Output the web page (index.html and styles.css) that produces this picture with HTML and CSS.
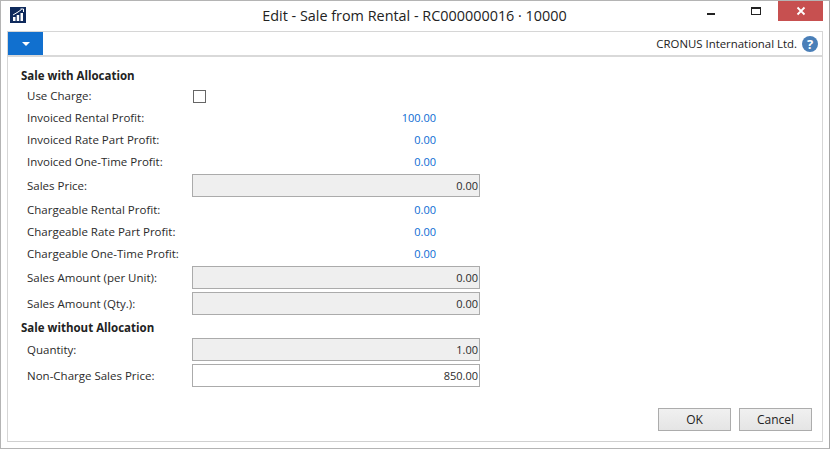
FILE: index.html
```html
<!DOCTYPE html>
<html lang="en">
<head>
    <meta charset="UTF-8">
    <title>Edit - Sale from Rental</title>
    <link rel="stylesheet" href="styles.css">
</head>
<body>
    <div class="window">
        <div class="titlebar">
            <svg class="app-icon" width="16" height="16" viewBox="0 0 16 16">
                <rect width="16" height="16" fill="#0f2a5c"/>
                <path d="M3 10h2.5v4H3zM6.7 8h2.5v6H6.7zM10.5 6H13v8h-2.5z" fill="#fff"/>
                <path d="M3 8 8 5l3.5-2.5M10.5 2H13.5v3" fill="none" stroke="#fff" stroke-width="1"/>
            </svg>
            <div class="title">Edit - Sale from Rental - RC000000016 · 10000</div>
            <div class="controls">
                <span class="ctl"><span class="min"></span></span>
                <span class="ctl"><span class="max"></span></span>
                <span class="ctl close">
                    <svg width="10" height="10" viewBox="0 0 10 10"><path d="M1.5 1.5l7 7M8.5 1.5l-7 7" stroke="#fff" stroke-width="1.8"/></svg>
                </span>
            </div>
        </div>
        <div class="panel">
            <div class="ribbon">
                <div class="menu-btn"><span class="arrow"></span></div>
                <div class="company">CRONUS International Ltd.</div>
                <svg class="help" width="16" height="16" viewBox="0 0 16 16">
                    <circle cx="8" cy="8" r="8" fill="#4a7fb8"/>
                    <text x="8" y="12.5" text-anchor="middle" class="help-mark">?</text>
                </svg>
            </div>
            <div class="content">
                <h2 class="group first">Sale with Allocation</h2>
                <div class="row r-check"><label>Use Charge:</label><span class="checkbox"></span></div>
                <div class="row"><label>Invoiced Rental Profit:</label><span class="value">100.00</span></div>
                <div class="row"><label>Invoiced Rate Part Profit:</label><span class="value">0.00</span></div>
                <div class="row"><label>Invoiced One-Time Profit:</label><span class="value">0.00</span></div>
                <div class="row r-input"><label>Sales Price:</label><span class="field">0.00</span></div>
                <div class="row"><label>Chargeable Rental Profit:</label><span class="value">0.00</span></div>
                <div class="row"><label>Chargeable Rate Part Profit:</label><span class="value">0.00</span></div>
                <div class="row"><label>Chargeable One-Time Profit:</label><span class="value">0.00</span></div>
                <div class="row r-input"><label>Sales Amount (per Unit):</label><span class="field">0.00</span></div>
                <div class="row r-input"><label>Sales Amount (Qty.):</label><span class="field">0.00</span></div>
                <h2 class="group">Sale without Allocation</h2>
                <div class="row r-input"><label>Quantity:</label><span class="field">1.00</span></div>
                <div class="row r-input"><label>Non-Charge Sales Price:</label><span class="field editable">850.00</span></div>
            </div>
            <div class="actions">
                <button>OK</button>
                <button>Cancel</button>
            </div>
        </div>
    </div>
</body>
</html>
```

FILE: styles.css
```css
html, body {
    margin: 0;
    padding: 0;
}

body {
    width: 830px;
    height: 449px;
    overflow: hidden;
    font-family: "Open Sans", "Noto Sans", sans-serif;
    font-size: 11.5px;
    color: #2b2b2b;
    background: #fff;
}

.window {
    box-sizing: border-box;
    width: 830px;
    height: 449px;
    display: flex;
    flex-direction: column;
    background: #fff;
    border: 1px solid #b4b4b4;
    border-right-color: #a8a8a8;
    padding: 0 6px 6px;
}

.titlebar {
    height: 30px;
    flex: none;
    display: flex;
    align-items: flex-start;
    margin: 0 -6px;
    position: relative;
}

.app-icon {
    margin: 6px 0 0 9px;
}

.title {
    flex: 1;
    text-align: center;
    font-size: 14.4px;
    color: #222;
    line-height: 30px;
    padding-right: 26px;
}

.controls {
    position: absolute;
    top: 0;
    right: 6px;
    display: flex;
}

.ctl {
    width: 45px;
    height: 20px;
    display: flex;
    align-items: center;
    justify-content: center;
}

.ctl.close {
    background: #c75050;
}

.min {
    width: 8px;
    height: 2px;
    background: #222;
    margin-top: 6px;
}

.max {
    box-sizing: border-box;
    width: 10px;
    height: 8px;
    border: 1px solid #222;
    border-top-width: 2px;
}

.panel {
    flex: 1;
    display: flex;
    flex-direction: column;
    border: 1px solid #d6d6d6;
    border-bottom-color: #d0d0d0;
}

.ribbon {
    height: 23px;
    flex: none;
    display: flex;
    align-items: center;
    border-bottom: 2px solid #d9d9d9;
}

.menu-btn {
    width: 35px;
    height: 23px;
    background: #1170cf;
    display: flex;
    align-items: center;
    justify-content: center;
}

.arrow {
    width: 0;
    height: 0;
    border-left: 4px solid transparent;
    border-right: 4px solid transparent;
    border-top: 4px solid #fff;
}

.company {
    flex: 1;
    text-align: right;
    font-size: 11.4px;
    color: #222;
    margin-right: 5px;
}

.help {
    margin-right: 4px;
}

.help-mark {
    font-family: "Open Sans", sans-serif;
    font-weight: 700;
    font-size: 13px;
    fill: #fff;
}

.content {
    flex: 1;
    padding: 11px 0 0 13px;
}

.group {
    margin: 4px 0 0;
    height: 16px;
    line-height: 16px;
    font-size: 11.5px;
    font-weight: 700;
    color: #222;
}

.group.first {
    margin-top: 0;
}

.row {
    display: flex;
    align-items: center;
    height: 22px;
    padding-left: 6px;
}

.row label {
    width: 165px;
    flex: none;
}

.r-check {
    height: 22px;
}

.r-input {
    height: 26px;
}

.checkbox {
    box-sizing: border-box;
    width: 13px;
    height: 13px;
    margin: 3px 0 0 1px;
    border: 1px solid #666;
    background: #fff;
}

.value {
    width: 244px;
    text-align: right;
    font-size: 11px;
    color: #0b6bd3;
}

.field {
    box-sizing: border-box;
    width: 288px;
    height: 23px;
    line-height: 21px;
    padding-right: 1px;
    text-align: right;
    font-size: 11px;
    background: #efefef;
    border: 1px solid #ababab;
}

.field.editable {
    background: #fff;
}

.actions {
    flex: none;
    display: flex;
    justify-content: flex-end;
    gap: 8px;
    padding: 0 10px 10px 0;
}

.actions button {
    width: 73px;
    height: 23px;
    padding: 0;
    font-family: inherit;
    font-size: 12px;
    color: #222;
    background: linear-gradient(to bottom, #f0f0f0, #e5e5e5);
    border: 1px solid #acacac;
}
```
